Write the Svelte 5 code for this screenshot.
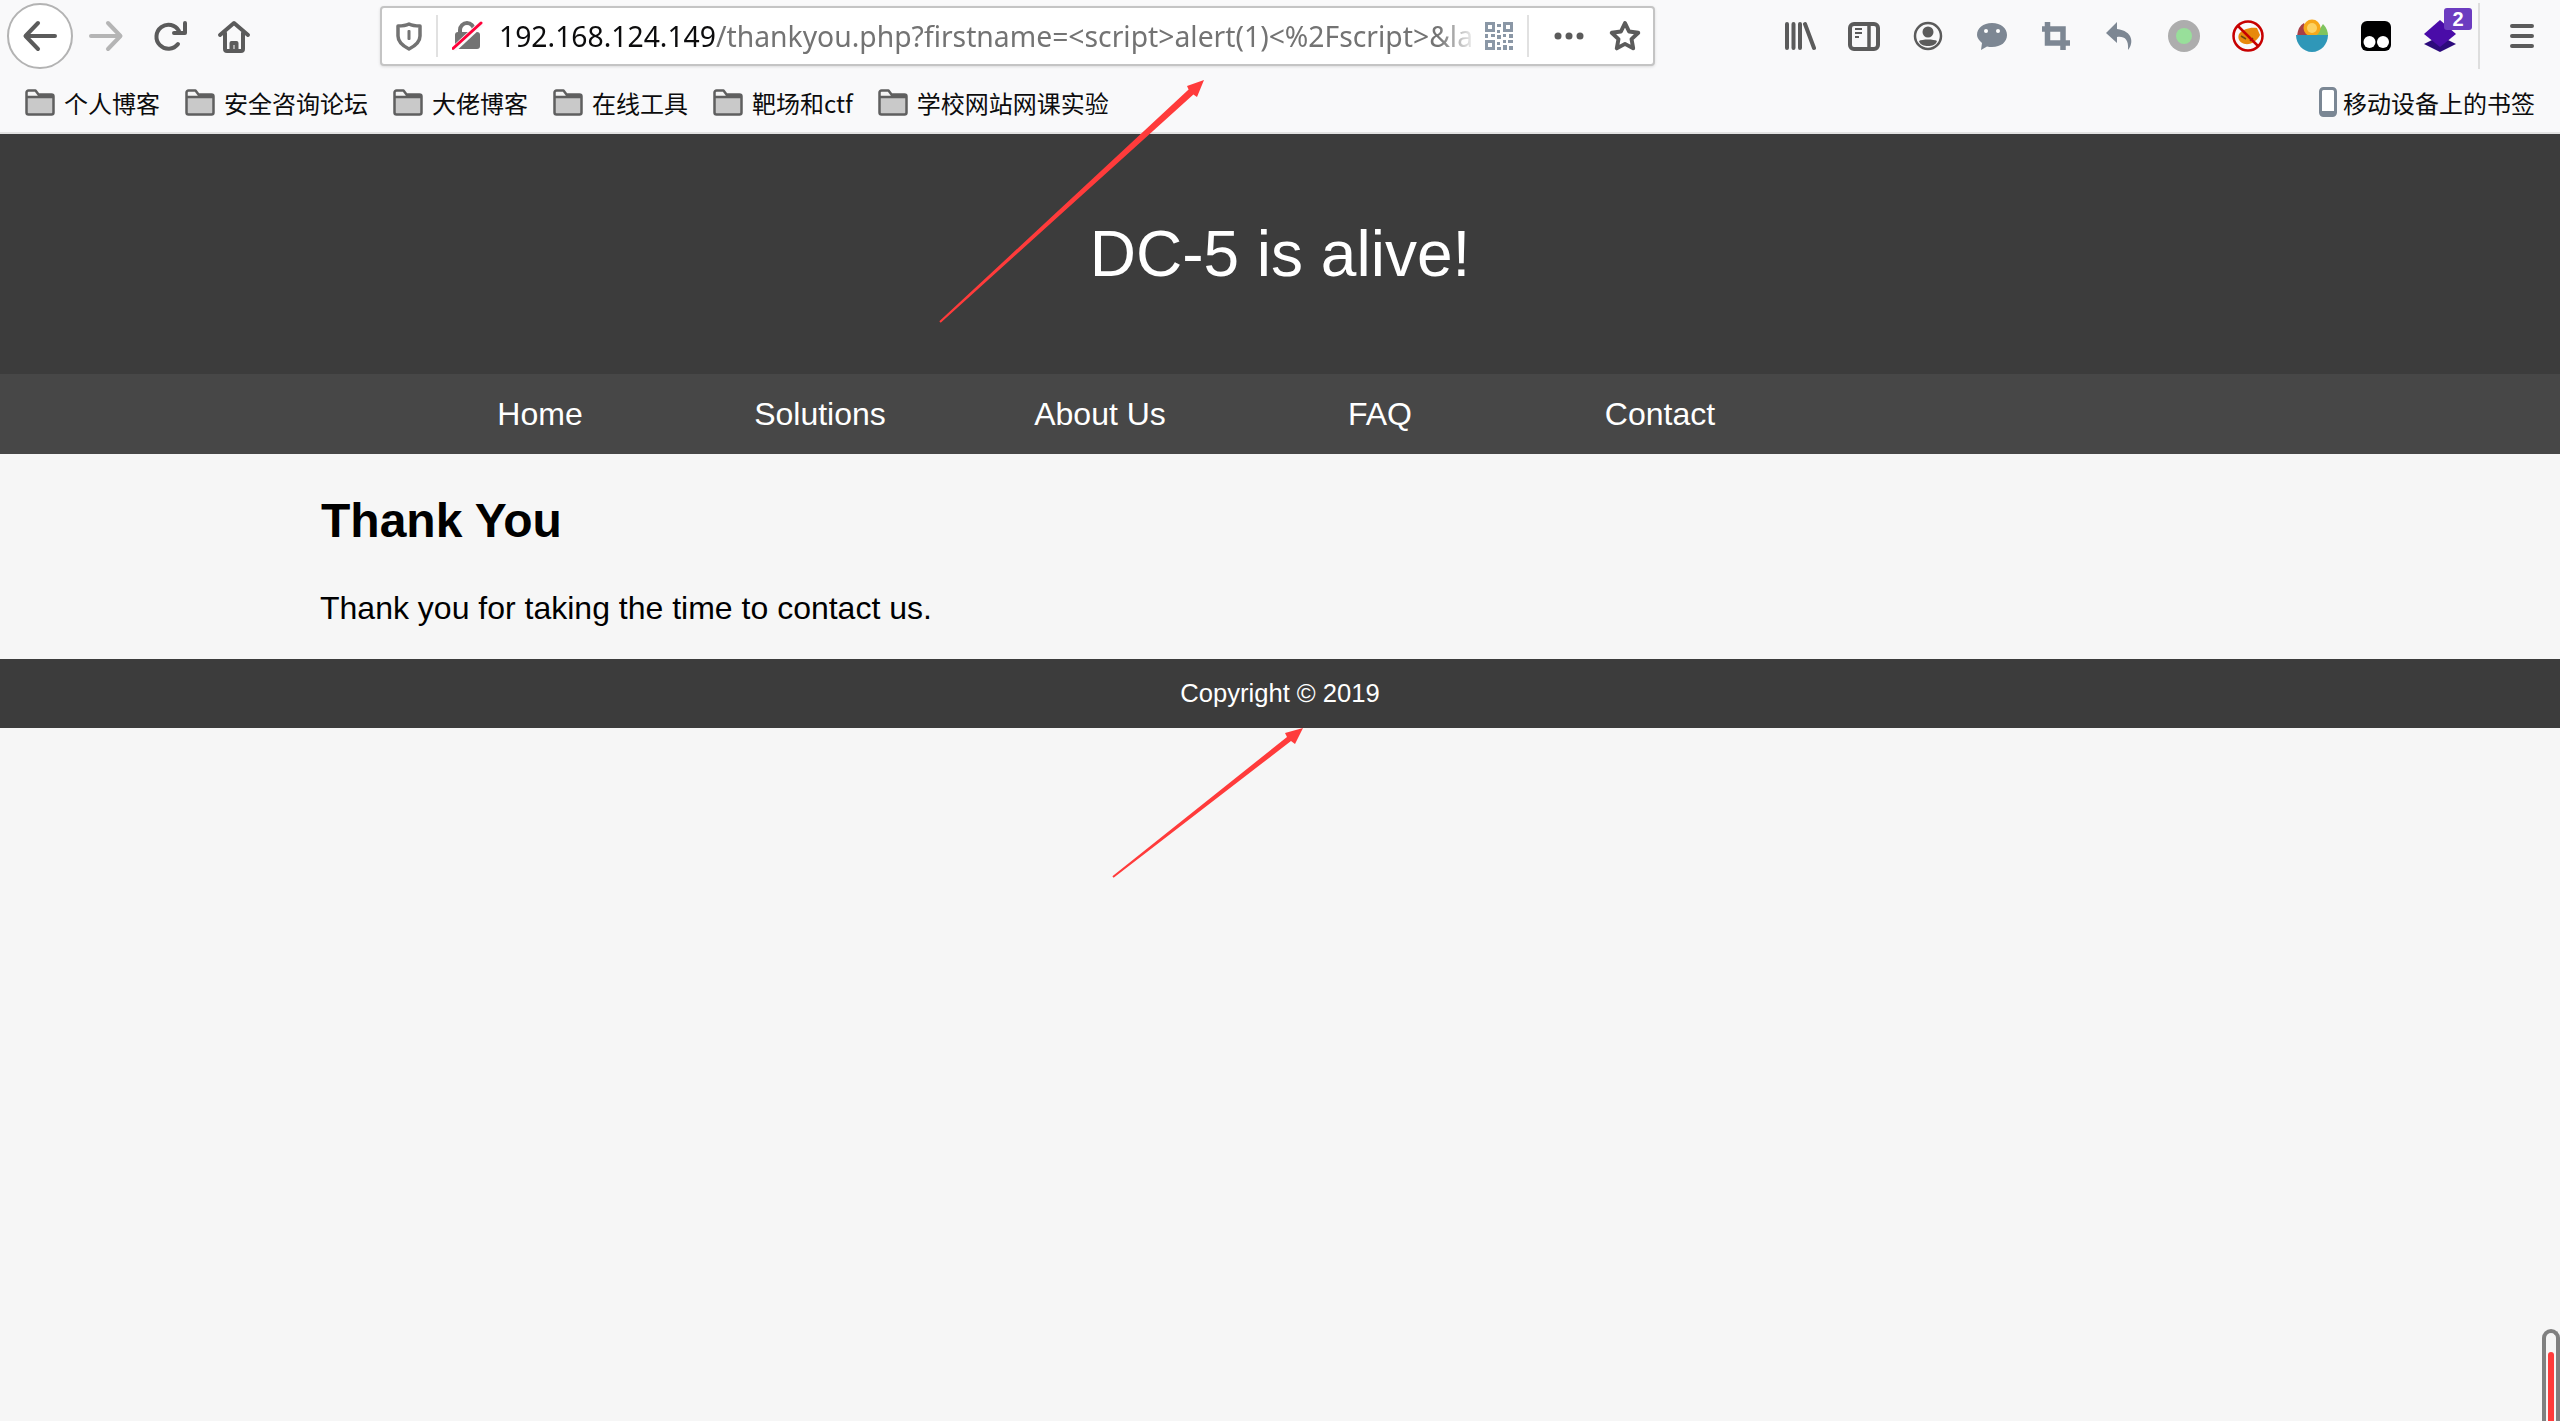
<script>
    const bookmarks = ['个人博客', '安全咨询论坛', '大佬博客', '在线工具', '靶场和ctf', '学校网站网课实验'];
    const links = ['Home', 'Solutions', 'About Us', 'FAQ', 'Contact'];
    const host = '192.168.124.149';
    const path = '/thankyou.php?firstname=<script>alert(1)<%2Fscript>&la';
</script>

<div class="browser">
    <div class="toolbar">
        <button class="back" aria-label="Back">
            <svg width="40" height="40" viewBox="0 0 40 40"><path class="line dark" d="M35 20H6M18 7 5.500 20 18 33" /></svg>
        </button>
        <button class="slot first" aria-label="Forward">
            <svg width="40" height="40" viewBox="0 0 40 40"><path class="line light" d="M5 20h29M22 7l12.500 13L22 33" /></svg>
        </button>
        <button class="slot" aria-label="Reload">
            <svg width="40" height="40" viewBox="0 0 40 40"><path class="line dark" d="M28 28A12 12 0 1 1 29 15M35 7v10H24" /></svg>
        </button>
        <button class="slot" aria-label="Home">
            <svg width="40" height="40" viewBox="0 0 40 40"><path class="line dark" d="M6 19 20 7l14 12M11 17v16a2 2 0 0 0 2 2h14a2 2 0 0 0 2-2V17M17.500 34v-7h5v7" /></svg>
        </button>

        <div class="urlbar">
            <span class="shield">
                <svg width="28" height="30" viewBox="0 0 28 30">
                    <path d="M14 3C10 5 6 5 3 5v10c0 6 5 10 11 13 6-3 11-7 11-13V5c-3 0-7 0-11-2z" fill="none" stroke="#737373" stroke-width="3.500" stroke-linejoin="round" />
                    <rect x="12.500" y="9" width="3" height="10" rx="1" fill="#737373" />
                </svg>
            </span>
            <span class="lock">
                <svg width="32" height="30" viewBox="0 0 32 30">
                    <path d="M8 11V9a7 7 0 0 1 14 0v2" fill="none" stroke="#737373" stroke-width="4" />
                    <rect x="3" y="11" width="25" height="17" rx="3" fill="#737373" />
                    <path d="M1 29 30 2" stroke="#f9f9fa" stroke-width="6" />
                    <path d="M1 27.500 29 2" stroke="#ff0039" stroke-width="3" stroke-linecap="round" />
                </svg>
            </span>
            <span class="url"><span class="host">{host}</span>{path}</span>
            <svg class="qr" width="28" height="28" viewBox="0 0 28 28">
                <g fill="#8a97a6">
                    <path d="M0 0h10v10H0zM18 0h10v10H18zM0 18h10v10H0z" />
                    <path d="M12 2h4v3h-4zM12 8h3v3h-3zM0 12h3v4H0zM6 12h4v3H6zM12 13h4v4h-4zM18 12h3v3h-3zM24 12h4v4h-4zM12 20h3v3h-3zM12 25h4v3h-4zM18 18h3v3h-3zM23 18h5v3h-5zM18 23h4v5h-4zM24 24h4v4h-4z" />
                </g>
                <path d="M3 3h4v4H3zM21 3h4v4h-4zM3 21h4v4H3z" fill="#fff" />
            </svg>
            <span class="sep"></span>
            <svg class="dots" width="30" height="8" viewBox="0 0 30 8">
                <circle cx="4" cy="4" r="3.500" fill="#5b5b5b" /><circle cx="15" cy="4" r="3.500" fill="#5b5b5b" /><circle cx="26" cy="4" r="3.500" fill="#5b5b5b" />
            </svg>
            <svg class="star" width="36" height="36" viewBox="0 0 32 32">
                <path d="M16 4.500l3.600 7.500 8.200 1.100-6 5.700 1.500 8.200-7.300-4-7.300 4 1.500-8.200-6-5.700 8.200-1.100z" fill="none" stroke="#5b5b5b" stroke-width="3.500" stroke-linejoin="round" />
            </svg>
        </div>

        <div class="tools">
            <span class="slot"><svg width="32" height="32" viewBox="0 0 32 32"><path class="line dark" d="M3 4v24M9.500 4v24M16 4v24M21 4l9 24" /></svg></span>
            <span class="slot"><svg width="36" height="32" viewBox="0 0 36 32"><rect x="4" y="4" width="28" height="25" rx="4" fill="none" stroke="#5b5b5b" stroke-width="4" /><path d="M23 4v25" stroke="#5b5b5b" stroke-width="3.500" /><path d="M9 9h7M9 13h7M9 17h4" stroke="#5b5b5b" stroke-width="2" /></svg></span>
            <span class="slot"><svg width="32" height="32" viewBox="0 0 32 32"><circle cx="16" cy="16" r="13" fill="none" stroke="#5b5b5b" stroke-width="2.500" /><circle cx="16" cy="12" r="5.500" fill="#5b5b5b" /><path d="M7 21c3-2 15-2 18 0-1 4-5 5-9 5s-8-1-9-5z" fill="#5b5b5b" /></svg></span>
            <span class="slot"><svg width="34" height="32" viewBox="0 0 34 32"><path d="M17 3c9 0 15 5 15 12s-6 12-15 12c-2 0-3 0-5 -.5L6 30l1-7C4 20 2 18 2 15 2 8 8 3 17 3z" fill="#7d8793" /><circle cx="11" cy="11" r="2" fill="#fff" /><circle cx="23" cy="11" r="2" fill="#fff" /></svg></span>
            <span class="slot"><svg width="32" height="32" viewBox="0 0 32 32"><path d="M7.500 2v21H30M2 9h21v21" fill="none" stroke="#7d8793" stroke-width="5.500" /></svg></span>
            <span class="slot"><svg width="30" height="32" viewBox="0 0 30 32"><path d="M12 2 1 13l11 10v-6c7-1 12 2 11 13 6-7 5-19-11-21z" fill="#7d8793" /></svg></span>
            <span class="slot"><svg width="34" height="34" viewBox="0 0 34 34"><circle cx="17" cy="17" r="16" fill="#adadad" /><circle cx="17" cy="17" r="8" fill="#98df9a" /></svg></span>
            <span class="slot"><svg width="34" height="34" viewBox="0 0 34 34"><path d="M8 15c4-5 11-7 18-6l3 7c-3 6-9 10-15 9-5-1-8-5-6-10z" fill="#e8890c" /><path d="M10 17l5 3M19 22l3-3" stroke="#6b4a12" stroke-width="1.500" /><circle cx="17" cy="17" r="14.500" fill="none" stroke="#c70000" stroke-width="2.500" /><path d="M7 7l20 20" stroke="#c70000" stroke-width="2.500" /></svg></span>
            <span class="slot"><svg width="36" height="36" viewBox="0 0 36 36"><path d="M3 18Q4 8 10 5l6 13z" fill="#a83f47" /><path d="M21 18 29 6q5 5 5 12z" fill="#7fc45e" /><circle cx="18" cy="10" r="8.500" fill="#f7a81b" /><circle cx="18" cy="10" r="5" fill="#fcd263" /><path d="M2 17h32c0 9-7 17-16 17S2 26 2 17z" fill="#2f97b8" /></svg></span>
            <span class="slot"><svg width="32" height="32" viewBox="0 0 32 32"><rect x="1" y="1" width="30" height="30" rx="6" fill="#000" /><circle cx="9.500" cy="22" r="6" fill="#fff" /><circle cx="23" cy="22" r="6" fill="#fff" /></svg></span>
            <span class="slot stack">
                <svg width="34" height="34" viewBox="0 0 34 34"><path d="M17 17 33 25 17 33 1 25z" fill="#2c0a7c" /><path d="M17 1 33 15 17 28 1 15z" fill="#4a0ca8" /></svg>
                <span class="badge">2</span>
            </span>
            <span class="bar"></span>
            <span class="slot"><svg width="32" height="32" viewBox="0 0 32 32"><path class="line dark" d="M6 6h20M6 16h20M6 26h20" /></svg></span>
        </div>
    </div>

    <div class="bookmarks">
        {#each bookmarks as name}
            <span class="mark">
                <svg width="30" height="27" viewBox="0 0 30 27">
                    <path d="M2 25V3.500A2 2 0 0 1 4 1.500h7l3 4h12a2 2 0 0 1 2 2V25z" fill="#f4f4f4" />
                    <rect x="2" y="8" width="26" height="17.500" fill="#c9c9c9" />
                    <path d="M1.500 23.500V3.500a2 2 0 0 1 2-2h7l3 4h13a2 2 0 0 1 2 2v16a2 2 0 0 1-2 2h-23a2 2 0 0 1-2-2zM2 8h26" fill="none" stroke="#5f5f5f" stroke-width="2.500" stroke-linejoin="round" />
                </svg>
                {name}
            </span>
        {/each}
        <span class="mark mobile">
            <svg width="18" height="30" viewBox="0 0 18 30">
                <rect x="1.500" y="1.500" width="15" height="27" rx="3" fill="#fff" stroke="#7b8794" stroke-width="3" />
                <path d="M1 24h16v2a3 3 0 0 1-3 3H4a3 3 0 0 1-3-3z" fill="#7b8794" />
            </svg>
            移动设备上的书签
        </span>
    </div>
</div>

<header class="site-header">
    <h1>DC-5 is alive!</h1>
</header>

<nav class="site-nav">
    <ul>
        {#each links as link}
            <li>{link}</li>
        {/each}
    </ul>
</nav>

<main class="content">
    <h2>Thank You</h2>
    <p>Thank you for taking the time to contact us.</p>
</main>

<footer class="site-footer">Copyright © 2019</footer>

<!-- red annotation arrows drawn over the shot -->
<svg class="arrows" width="2560" height="1421" viewBox="0 0 2560 1421">
    <path d="M939.300 321.300 1188.600 89.400 1187 86 1204 80 1197 97 1193.400 94.600 940.700 322.700z" fill="#ff3b3b" />
    <path d="M1112.400 876.200 1287 737 1285 733 1303 728 1295 744 1291 741 1113.600 877.800z" fill="#ff3b3b" />
</svg>

<div class="thermo"><span class="mercury"></span></div>

<style>
    :global(body) {
        background: #f6f6f6;
        overflow: hidden;
        font-family: "Liberation Sans", Arial, sans-serif;
    }

    button {
        border: 0;
        padding: 0;
        background: none;
    }

    .browser {
        background: #f9f9fa;
        height: 132px;
        border-bottom: 2px solid #e2e2e2;
    }

    .toolbar {
        display: flex;
        align-items: center;
        height: 72px;
    }

    .line {
        fill: none;
        stroke-width: 4;
        stroke-linecap: round;
        stroke-linejoin: round;
    }
    .dark { stroke: #5b5b5b; }
    .light { stroke: #b5b5b5; }

    .back {
        display: flex;
        align-items: center;
        justify-content: center;
        box-sizing: border-box;
        width: 66px;
        height: 66px;
        margin-left: 7px;
        border: 2px solid #b3b3b3;
        border-radius: 50%;
        background: #fff;
    }

    .slot {
        position: relative;
        display: flex;
        align-items: center;
        justify-content: center;
        width: 64px;
        height: 64px;
        flex: none;
    }
    .first { margin-left: 1px; }

    .urlbar {
        display: flex;
        align-items: center;
        box-sizing: border-box;
        width: 1275px;
        height: 60px;
        margin-left: 114px;
        background: #fff;
        border: 2px solid #c4c4c4;
        border-radius: 4px;
        box-shadow: 0 1px 3px rgba(0, 0, 0, 0.12);
    }

    .shield {
        display: flex;
        align-items: center;
        justify-content: center;
        width: 54px;
        height: 42px;
        border-right: 2px solid #e1e1e1;
    }

    .lock {
        display: flex;
        align-items: center;
        justify-content: center;
        width: 49px;
        padding-left: 5px;
    }

    .url {
        flex: 1;
        min-width: 0;
        overflow: hidden;
        white-space: nowrap;
        margin-left: 7px;
        font: 28.3px "Noto Sans", "Open Sans", sans-serif;
        color: #737373;
        -webkit-mask-image: linear-gradient(to right, #000 calc(100% - 40px), transparent);
        mask-image: linear-gradient(to right, #000 calc(100% - 40px), transparent);
    }
    .host { color: #0c0c0d; }

    .qr {
        flex: none;
        margin-left: 7px;
    }

    .sep {
        flex: none;
        width: 2px;
        height: 42px;
        margin-left: 14px;
        background: #e1e1e1;
    }
    .dots {
        flex: none;
        margin-left: 25px;
    }
    .star {
        flex: none;
        margin-left: 23px;
        margin-right: 10px;
    }

    .tools {
        display: flex;
        align-items: center;
        margin-left: auto;
        padding-right: 6px;
    }

    .badge {
        position: absolute;
        top: 4px;
        left: 36px;
        width: 28px;
        height: 22px;
        border-radius: 3px;
        background: #6c3cc0;
        color: #fff;
        font: bold 20px/22px "Liberation Sans", sans-serif;
        text-align: center;
    }

    .bar {
        width: 2px;
        height: 66px;
        margin: 0 10px 0 6px;
        background: #dedede;
    }

    .bookmarks {
        display: flex;
        align-items: center;
        gap: 25px;
        height: 60px;
        padding: 0 25px;
    }

    .mark {
        display: flex;
        align-items: center;
        gap: 9px;
        font: 24px "Noto Sans CJK SC", sans-serif;
        color: #0c0c0d;
    }
    .mobile {
        gap: 6px;
        margin-left: auto;
    }

    .site-header {
        background: #3c3c3c;
        height: 240px;
        display: flex;
        align-items: center;
        justify-content: center;
    }
    h1 {
        margin: 0;
        font-size: 64px;
        font-weight: 400;
        color: #fff;
    }

    .site-nav {
        background: #474747;
        height: 80px;
    }
    ul {
        display: flex;
        box-sizing: border-box;
        width: 1920px;
        height: 100%;
        margin: 0 auto;
        padding: 0 0 0 80px;
        list-style: none;
    }
    li {
        width: 280px;
        font-size: 32px;
        line-height: 80px;
        text-align: center;
        color: #fff;
    }

    .content {
        box-sizing: border-box;
        width: 1920px;
        height: 205px;
        margin: 0 auto;
        padding-top: 39px;
    }
    h2 {
        margin: 0 0 42px 1px;
        font-size: 48px;
        color: #000;
    }
    p {
        margin: 0;
        font-size: 32px;
        color: #000;
    }

    .site-footer {
        background: #3c3c3c;
        height: 69px;
        font-size: 25.6px;
        line-height: 69px;
        text-align: center;
        color: #fff;
    }

    .arrows {
        position: absolute;
        top: 0;
        left: 0;
        pointer-events: none;
    }

    .thermo {
        position: absolute;
        right: 0;
        bottom: 0;
        box-sizing: border-box;
        width: 18px;
        height: 92px;
        border: 4px solid #808080;
        border-bottom: 0;
        border-radius: 9px 9px 0 0;
        background: #f6f6f6;
    }
    .mercury {
        position: absolute;
        left: 2px;
        right: 2px;
        top: 19px;
        bottom: 0;
        border-radius: 3px 3px 0 0;
        background: #ff3b3b;
    }
</style>
